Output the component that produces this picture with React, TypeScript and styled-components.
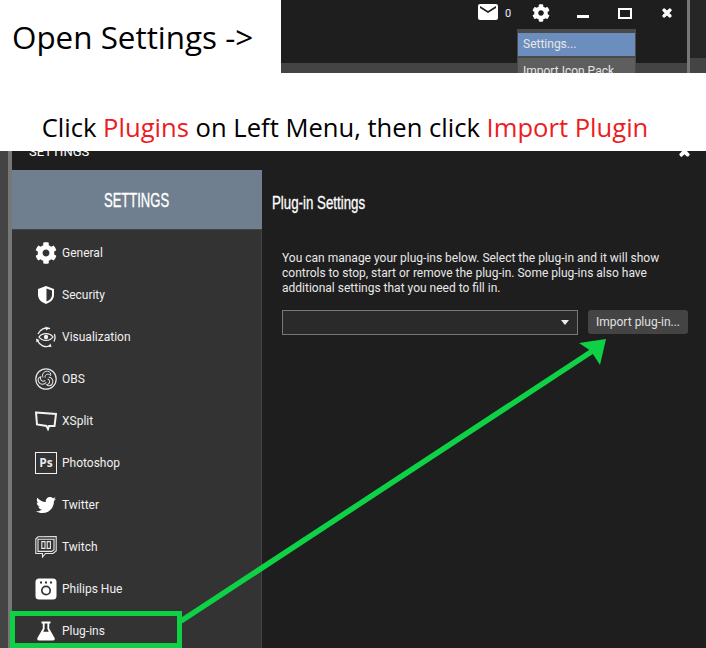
import React from 'react';
import styled, { createGlobalStyle } from 'styled-components';
import { FaCog, FaTwitter, FaTimes } from 'react-icons/fa';
import { MdEmail } from 'react-icons/md';

const GlobalStyle = createGlobalStyle`
  html, body {
    margin: 0;
    padding: 0;
    background: #fff;
  }
`;

const Page = styled.div`
  position: relative;
  width: 706px;
  height: 648px;
  overflow: hidden;
  background: #fff;
  font-family: Roboto, sans-serif;
`;

const TopRow = styled.div`
  display: flex;
  height: 73px;
`;

const OpenLabel = styled.div`
  width: 281px;
  padding: 16px 0 0 12px;
  box-sizing: border-box;
  font: 31.4px/42px "Open Sans", sans-serif;
  color: #000;
  white-space: nowrap;
`;

const TopShot = styled.div`
  position: relative;
  flex: 1;
  display: flex;
  overflow: hidden;
  background: #444;
`;

const TopDark = styled.div`
  width: 406px;
  height: 63px;
  display: flex;
  align-items: flex-start;
  padding-left: 197px;
  box-sizing: border-box;
  background: #1e1e1e;
  color: #fff;
`;

const TopEdge = styled.div`
  width: 3px;
  background: #777;
`;

const TopSide = styled.div`
  flex: 1;
  height: 58px;
  background: #262626;
`;

const Control = styled.div<{ $left: number; $top: number; $width: number }>`
  display: flex;
  flex: none;
  width: ${p => p.$width}px;
  margin: ${p => p.$top}px 0 0 ${p => p.$left}px;
`;

const MailGlyph = styled(MdEmail)`
  margin: -2px;
  flex: none;
`;

const Count = styled.span`
  font-size: 11px;
  line-height: 13px;
  color: #e8f0ff;
`;

const MinimizeBar = styled.div`
  width: 12px;
  height: 3px;
  background: #fff;
`;

const MaximizeBox = styled.div`
  width: 14px;
  height: 11px;
  box-sizing: border-box;
  border: 2px solid #fff;
`;

const HeavyCross = styled(FaTimes)`
  stroke: currentColor;
  stroke-width: 50px;
  flex: none;
`;

const Menu = styled.div`
  position: absolute;
  left: 236px;
  top: 29px;
  width: 119px;
  height: 60px;
  padding: 4px 1px 0;
  box-sizing: border-box;
  background: #4a4a4a;
  font-size: 12px;
  color: #e6e6e6;
`;

const MenuItem = styled.div<{ $active?: boolean }>`
  height: ${p => (p.$active ? 23 : 30)}px;
  padding-left: 5px;
  line-height: ${p => (p.$active ? 23 : 26)}px;
  background: ${p => (p.$active ? '#6c8ebf' : '#5e5e5e')};
  border-bottom: ${p => (p.$active ? '2px solid #4a4a4a' : 'none')};
  box-shadow: ${p => (p.$active ? '0 1px 0 #bbb' : 'none')};
`;

const Caption = styled.div`
  height: 78px;
  padding: 38px 16px 0 0;
  box-sizing: border-box;
  text-align: center;
  font: 25.6px/34px "Open Sans", sans-serif;
  color: #000;
  white-space: nowrap;
`;

const Red = styled.span`
  color: #ed1c24;
`;

const AppPanel = styled.div`
  display: flex;
  height: 497px;
  background: #1e1e1e;
  color: #fff;
`;

const LeftEdge = styled.div`
  width: 8px;
  background: #444;
  border-right: 4px solid #777;
`;

const AppBody = styled.div`
  flex: 1;
  display: flex;
  flex-direction: column;
  min-width: 0;
`;

const TitleBar = styled.div`
  height: 19px;
  flex: none;
  display: flex;
  justify-content: space-between;
  padding: 0 15px 0 17px;
  overflow: hidden;
`;

const TitleText = styled.span`
  margin-top: -7px;
  font-size: 13px;
  line-height: 15px;
`;

const CloseIcon = styled.span`
  margin-top: -6px;
  font-size: 13px;
  line-height: 13px;
`;

const Columns = styled.div`
  flex: 1;
  display: flex;
  min-height: 0;
`;

const Sidebar = styled.div`
  width: 250px;
  flex: none;
  display: flex;
  flex-direction: column;
  background: #333;
  border-right: 1px solid #444;
  box-sizing: border-box;
`;

const SidebarHead = styled.div`
  height: 60px;
  flex: none;
  margin: 0 -1px 2px 0;
  display: flex;
  align-items: center;
  justify-content: center;
  background: #6f7f90;
  border-bottom: 1px solid #444;
  box-sizing: border-box;
  padding-top: 1px;
`;

const SidebarHeadText = styled.span`
  display: inline-block;
  font: 21px/30px "Liberation Sans", sans-serif;
  -webkit-text-stroke: 0.4px #fff;
  transform: scaleX(0.62);
`;

const NavItem = styled.div`
  height: 42px;
  flex: none;
  display: flex;
  align-items: center;
  padding-left: 23px;
  font-size: 12px;
  color: #f0f0f0;
`;

const NavIcon = styled.span`
  width: 22px;
  height: 22px;
  margin-right: 5px;
  display: flex;
  align-items: center;
  justify-content: center;
  color: #fff;
  flex: none;
`;

const PsBox = styled.span`
  width: 22px;
  height: 22px;
  box-sizing: border-box;
  border: 1.5px solid #f0f0f0;
  display: flex;
  align-items: center;
  justify-content: center;
  font: bold 12px/12px "Open Sans", sans-serif;
  color: #e8e8e8;
`;

const Main = styled.div`
  flex: 1;
  padding: 0 10px;
  min-width: 0;
`;

const MainTitle = styled.h2`
  margin: 20px 0 0;
  font: 19px/26px "Liberation Sans", sans-serif;
  -webkit-text-stroke: 0.3px #fff;
  color: #fff;
  white-space: nowrap;
  transform: scaleX(0.7);
  transform-origin: left center;
`;

const Description = styled.p`
  margin: 35px 0 0 10px;
  font-size: 12px;
  line-height: 15px;
  color: #e8e8e8;
  white-space: nowrap;
`;

const Controls = styled.div`
  display: flex;
  align-items: flex-start;
  margin: 14px 0 0 10px;
`;

const SelectBox = styled.div`
  width: 296px;
  height: 25px;
  box-sizing: border-box;
  display: flex;
  align-items: center;
  justify-content: flex-end;
  padding-right: 8px;
  background: #2a2a2a;
  border: 1px solid #777;
`;

const Caret = styled.span`
  width: 0;
  height: 0;
  border-left: 4px solid transparent;
  border-right: 4px solid transparent;
  border-top: 5px solid #eee;
`;

const ImportButton = styled.button`
  width: 100px;
  height: 24px;
  margin-left: 10px;
  padding: 0;
  border: none;
  border-radius: 3px;
  background: #444;
  color: #e0e0e0;
  font: 12px Roboto, sans-serif;
`;

const Annotation = styled.svg`
  position: absolute;
  left: 0;
  top: 0;
  pointer-events: none;
`;

const ShieldIcon = () => (
  <svg width="20" height="20" viewBox="0 0 20 20">
    <path d="M10 1 L18 4 V10 C18 14.5 14 17.5 10 19 C6 17.5 2 14.5 2 10 V4 Z" fill="#fff" />
    <path d="M10.5 3.6 L16 5.6 V10 C16 13 13.5 15.3 10.5 16.6 Z" fill="#333" />
  </svg>
);

const EyeIcon = () => (
  <svg width="22" height="22" viewBox="0 0 22 22" fill="none" stroke="#f2f2f2" strokeWidth="1.3">
    <path d="M4 11 C7 6.5 15 6.5 18 11 C15 15.5 7 15.5 4 11 Z" />
    <circle cx="11" cy="11" r="2.2" fill="#f2f2f2" stroke="none" />
    <path d="M3 8 A9.5 9.5 0 0 1 15 2.6" />
    <path d="M19.5 8 A9.5 9.5 0 0 1 19 15.5" />
    <path d="M15 19.8 A9.5 9.5 0 0 1 2.5 14.5" />
    <path d="M10.5 0.5 L14 2.4 L11 4.5 Z M1 12.5 L4.5 14 L1.5 16.5 Z M15.5 17.5 L16.5 21 L13 20.5 Z" fill="#f2f2f2" stroke="none" />
  </svg>
);

const ObsIcon = () => (
  <svg width="22" height="22" viewBox="0 0 22 22" fill="none" stroke="#e6e6e6">
    <circle cx="11" cy="11" r="10.2" strokeWidth="1.2" />
    {[0, 120, 240].map(angle => (
      <g key={angle} transform={`rotate(${angle} 11 11)`}>
        <path d="M8 9.6 C6.5 6 9 3 12.4 3.2 C15 3.4 16.4 5.6 15.6 7.6 C14.4 5.8 11.4 5.6 10.4 7.6 C10 8.4 10 9 10.2 9.6" strokeWidth="1" />
      </g>
    ))}
  </svg>
);

const XSplitIcon = () => (
  <svg width="22" height="20" viewBox="0 0 22 20" fill="none">
    <path d="M1 1.5 L21 3 L19.5 15 L14 15 L13 18 L11.5 15 L2 13.5 Z" stroke="#f2f2f2" strokeWidth="2" />
  </svg>
);

const TwitchIcon = () => (
  <svg width="22" height="22" viewBox="0 0 22 22" fill="none" stroke="#e8e8e8" strokeWidth="1.1">
    <path d="M0.8 3 L3 0.8 L21.2 0.6 V15 L18 17.5 H10.5 L7.5 21 V17.5 H0.8 Z" />
    <path d="M3 3.2 H19 V13.8 L16.8 15.4 H3 Z" />
    <path d="M6.8 5.6 H10 V12.4 H6.8 Z M12.2 5.6 H15.4 V12.4 H12.2 Z" />
  </svg>
);

const HueIcon = () => (
  <svg width="22" height="22" viewBox="0 0 22 22">
    <rect x="0.5" y="0.5" width="21" height="21" rx="3.5" fill="#fff" />
    <circle cx="11" cy="12.5" r="4.2" fill="none" stroke="#333" strokeWidth="1.7" />
    <rect x="5" y="3.5" width="2" height="2" fill="#333" />
    <rect x="10" y="3.5" width="2" height="2" fill="#333" />
    <rect x="15" y="3.5" width="2" height="2" fill="#333" />
  </svg>
);

const FlaskIcon = () => (
  <svg width="20" height="20" viewBox="0 0 20 20">
    <path d="M5.5 0.5 H14.5 V2.6 H13.2 V7.5 L18.6 17 Q19.2 19.5 17 19.5 H3 Q0.8 19.5 1.4 17 L6.8 7.5 V2.6 H5.5 Z" fill="#fff" />
    <path d="M8.6 2.6 H11.4 V8 L12.8 10.8 H7.2 L8.6 8 Z" fill="#333" />
  </svg>
);

const navItems = [
  { label: 'General', icon: <FaCog size={22} /> },
  { label: 'Security', icon: <ShieldIcon /> },
  { label: 'Visualization', icon: <EyeIcon /> },
  { label: 'OBS', icon: <ObsIcon /> },
  { label: 'XSplit', icon: <XSplitIcon /> },
  { label: 'Photoshop', icon: <PsBox>Ps</PsBox> },
  { label: 'Twitter', icon: <FaTwitter size={20} /> },
  { label: 'Twitch', icon: <TwitchIcon /> },
  { label: 'Philips Hue', icon: <HueIcon /> },
  { label: 'Plug-ins', icon: <FlaskIcon /> },
];

const GREEN = '#0ed145';

const App: React.FC = () => (
  <Page>
    <GlobalStyle />
    <TopRow>
      <OpenLabel>Open Settings -&gt;</OpenLabel>
      <TopShot>
        <TopDark>
          <Control $left={0} $top={2} $width={20}><MailGlyph size={24} /></Control>
          <Control $left={7} $top={7} $width={6}><Count>0</Count></Control>
          <Control $left={21} $top={4} $width={18}><FaCog size={18} /></Control>
          <Control $left={27} $top={15} $width={12}><MinimizeBar /></Control>
          <Control $left={29} $top={8} $width={14}><MaximizeBox /></Control>
          <Control $left={29} $top={7} $width={12}><HeavyCross size={12} /></Control>
        </TopDark>
        <TopEdge />
        <TopSide />
        <Menu>
          <MenuItem $active>Settings...</MenuItem>
          <MenuItem>Import Icon Pack</MenuItem>
        </Menu>
      </TopShot>
    </TopRow>
    <Caption>
      Click <Red>Plugins</Red> on Left Menu, then click <Red>Import Plugin</Red>
    </Caption>
    <AppPanel>
      <LeftEdge />
      <AppBody>
        <TitleBar>
          <TitleText>SETTINGS</TitleText>
          <CloseIcon><HeavyCross size={13} /></CloseIcon>
        </TitleBar>
        <Columns>
          <Sidebar>
            <SidebarHead><SidebarHeadText>SETTINGS</SidebarHeadText></SidebarHead>
            {navItems.map(item => (
              <NavItem key={item.label}>
                <NavIcon>{item.icon}</NavIcon>
                {item.label}
              </NavItem>
            ))}
          </Sidebar>
          <Main>
            <MainTitle>Plug-in Settings</MainTitle>
            <Description>
              You can manage your plug-ins below. Select the plug-in and it will show<br />
              controls to stop, start or remove the plug-in. Some plug-ins also have<br />
              additional settings that you need to fill in.
            </Description>
            <Controls>
              <SelectBox><Caret /></SelectBox>
              <ImportButton>Import plug-in...</ImportButton>
            </Controls>
          </Main>
        </Columns>
      </AppBody>
    </AppPanel>
    <Annotation width="706" height="648" viewBox="0 0 706 648">
      <rect x="12.5" y="613.5" width="167" height="32" fill="none" stroke={GREEN} strokeWidth="5" />
      <line x1="181" y1="621" x2="594" y2="350" stroke={GREEN} strokeWidth="5.5" />
      <path d="M606 339 L579 343 L591 351 L600 365 Z" fill={GREEN} />
    </Annotation>
  </Page>
);

export default App;
